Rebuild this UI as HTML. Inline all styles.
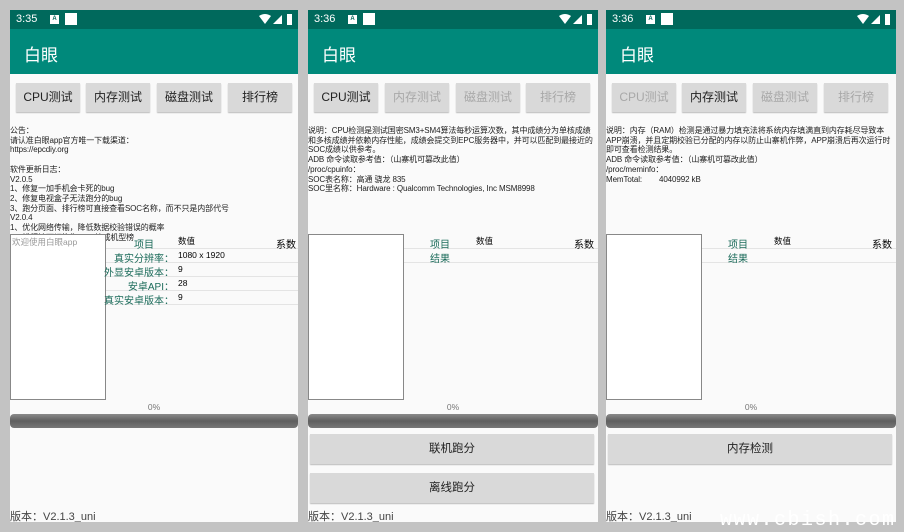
<!DOCTYPE html>
<html><head><meta charset="utf-8"><style>
*{margin:0;padding:0;box-sizing:border-box}
body{width:904px;height:532px;background:#c3c3c3;position:relative;overflow:hidden;font-family:"Liberation Sans","Noto Sans CJK SC",sans-serif}
.ph{position:absolute;top:10px;height:512px;background:#fafafa;overflow:hidden}
.sb{position:absolute;left:0;right:0;top:0;height:19px;background:#00695c;color:#fff;font-size:11px}
.sb .t{position:absolute;left:6px;top:3px}
.sb .a{position:absolute;left:40px;top:5px;width:9px;height:9px;background:#fff;font-size:6px;color:#00695c;text-align:center;line-height:9px;font-weight:bold}
.sb .w{position:absolute;left:55px;top:3px;width:12px;height:12px;background:#fff}
.sb .ic{position:absolute;right:4px;top:3px;width:36px;height:13px}
.ab{position:absolute;left:0;right:0;top:19px;height:45px;background:#00897b;color:#fff;font-size:17px;padding:12px 0 0 14px}
.btn{position:absolute;top:73px;height:29px;width:64px;background:#d9d9d9;box-shadow:0 1px 1px #bbb;font-size:12px;color:#222;text-align:center;line-height:29px}
.btn.d{color:#a8a8a8}
.tx{position:absolute;left:0;top:116px;right:0;font-size:8px;line-height:9.7px;color:#222;white-space:nowrap;letter-spacing:-0.1px}
.box{position:absolute;top:224px;height:166px;border:1px solid #888;background:#fff;font-size:8.5px;color:#999}
.tb{position:absolute;top:224px;right:0;font-size:10px}
.row{position:absolute;left:0;right:0;height:14px;border-bottom:1px solid #e4e4e4}
.g{color:#1b6b5a}
.lb{position:absolute;right:124px;top:1px;white-space:nowrap}
.pct{position:absolute;top:392px;left:0;right:0;text-align:center;font-size:8.5px;color:#777}
.pb{position:absolute;top:404px;left:0;right:0;height:14px;border-radius:4px;background:linear-gradient(#8a8a8a,#5f5f5f 50%,#777)}
.bb{position:absolute;left:2px;right:4px;height:30px;background:#d9d9d9;box-shadow:0 1px 1px #bbb;text-align:center;line-height:30px;font-size:11.5px;color:#222}
.ver{position:absolute;left:0;top:498px;font-size:11px;color:#444}
.wm{position:absolute;left:720px;top:509px;font-size:20px;color:#fff;letter-spacing:1.5px;font-family:"Liberation Mono",monospace;white-space:nowrap}
</style></head><body>

<!-- phone 1 -->
<div class="ph" style="left:10px;width:288px">
<div class="sb"><span class="t">3:35</span><span class="a">A</span><span class="w"></span>
<svg class="ic" viewBox="0 0 36 13"><path d="M1 3 Q7 -1 13 3 L7 11Z" fill="#fff"/><path d="M15 11 L24 2 L24 11Z" fill="#fff"/><rect x="29" y="1" width="5" height="11" fill="#fff"/></svg></div>
<div class="ab">白眼</div>
<div class="btn" style="left:6px">CPU测试</div>
<div class="btn" style="left:76px">内存测试</div>
<div class="btn" style="left:147px">磁盘测试</div>
<div class="btn" style="left:218px">排行榜</div>
<div class="tx">公告：<br>请认准白眼app官方唯一下载渠道：<br>https://epcdiy.org<br><br>软件更新日志：<br>V2.0.5<br>1、修复一加手机会卡死的bug<br>2、修复电视盒子无法跑分的bug<br>3、跑分页面、排行榜可直接查看SOC名称，而不只是内部代号<br>V2.0.4<br>1、优化网络传输，降低数据校验错误的概率<br>2、排行榜可切换为SOC榜或机型榜</div>
<div class="box" style="left:0;width:96px;padding:1px 0 0 1px">欢迎使用白眼app</div>
<div class="tb" style="left:96px;height:90px">
<div class="row" style="top:0;height:15px"><span class="g" style="position:absolute;left:28px;top:2px">项目</span><span style="position:absolute;left:72px;top:1px;font-size:8.5px">数值</span><span style="position:absolute;right:2px;top:2px">系数</span></div>
<div class="row" style="top:15px"><span class="g lb">真实分辨率：</span><span style="position:absolute;left:72px;top:1px;font-size:8.5px">1080 x 1920</span></div>
<div class="row" style="top:29px"><span class="g lb">外显安卓版本：</span><span style="position:absolute;left:72px;top:1px;font-size:8.5px">9</span></div>
<div class="row" style="top:43px"><span class="g lb">安卓API：</span><span style="position:absolute;left:72px;top:1px;font-size:8.5px">28</span></div>
<div class="row" style="top:57px"><span class="g lb">真实安卓版本：</span><span style="position:absolute;left:72px;top:1px;font-size:8.5px">9</span></div>
</div>
<div class="pct">0%</div><div class="pb"></div>
<div class="ver">版本：V2.1.3_uni</div>
</div>

<!-- phone 2 -->
<div class="ph" style="left:308px;width:290px">
<div class="sb"><span class="t">3:36</span><span class="a">A</span><span class="w"></span>
<svg class="ic" viewBox="0 0 36 13"><path d="M1 3 Q7 -1 13 3 L7 11Z" fill="#fff"/><path d="M15 11 L24 2 L24 11Z" fill="#fff"/><rect x="29" y="1" width="5" height="11" fill="#fff"/></svg></div>
<div class="ab">白眼</div>
<div class="btn" style="left:6px">CPU测试</div>
<div class="btn d" style="left:77px">内存测试</div>
<div class="btn d" style="left:148px">磁盘测试</div>
<div class="btn d" style="left:218px">排行榜</div>
<div class="tx">说明：CPU检测是测试国密SM3+SM4算法每秒运算次数，其中成绩分为单核成绩<br>和多核成绩并依赖内存性能，成绩会提交到EPC服务器中，并可以匹配到最接近的<br>SOC成绩以供参考。<br>ADB 命令读取参考值：（山寨机可篡改此值）<br>/proc/cpuinfo：<br>SOC表名称：高通 骁龙 835<br>SOC里名称：Hardware : Qualcomm Technologies, Inc MSM8998</div>
<div class="box" style="left:0;width:96px"></div>
<div class="tb" style="left:96px;height:40px">
<div class="row" style="top:0;height:15px"><span class="g" style="position:absolute;left:26px;top:2px">项目</span><span style="position:absolute;left:72px;top:1px;font-size:8.5px">数值</span><span style="position:absolute;right:4px;top:2px">系数</span></div>
<div class="row" style="top:15px"><span class="g" style="position:absolute;left:26px;top:1px">结果</span></div>
</div>
<div class="pct">0%</div><div class="pb"></div>
<div class="bb" style="top:424px">联机跑分</div>
<div class="bb" style="top:463px">离线跑分</div>
<div class="ver">版本：V2.1.3_uni</div>
</div>

<!-- phone 3 -->
<div class="ph" style="left:606px;width:290px">
<div class="sb"><span class="t">3:36</span><span class="a">A</span><span class="w"></span>
<svg class="ic" viewBox="0 0 36 13"><path d="M1 3 Q7 -1 13 3 L7 11Z" fill="#fff"/><path d="M15 11 L24 2 L24 11Z" fill="#fff"/><rect x="29" y="1" width="5" height="11" fill="#fff"/></svg></div>
<div class="ab">白眼</div>
<div class="btn d" style="left:6px">CPU测试</div>
<div class="btn" style="left:76px">内存测试</div>
<div class="btn d" style="left:147px">磁盘测试</div>
<div class="btn d" style="left:218px">排行榜</div>
<div class="tx">说明：内存（RAM）检测是通过暴力填充法将系统内存填满直到内存耗尽导致本<br>APP崩溃，并且定期校验已分配的内存以防止山寨机作弊，APP崩溃后再次运行时<br>即可查看检测结果。<br>ADB 命令读取参考值：（山寨机可篡改此值）<br>/proc/meminfo：<br>MemTotal:&nbsp;&nbsp;&nbsp;&nbsp;&nbsp;&nbsp;&nbsp;&nbsp;4040992 kB</div>
<div class="box" style="left:0;width:96px"></div>
<div class="tb" style="left:96px;height:40px">
<div class="row" style="top:0;height:15px"><span class="g" style="position:absolute;left:26px;top:2px">项目</span><span style="position:absolute;left:72px;top:1px;font-size:8.5px">数值</span><span style="position:absolute;right:4px;top:2px">系数</span></div>
<div class="row" style="top:15px"><span class="g" style="position:absolute;left:26px;top:1px">结果</span></div>
</div>
<div class="pct">0%</div><div class="pb"></div>
<div class="bb" style="top:424px">内存检测</div>
<div class="ver">版本：V2.1.3_uni</div>
</div>

<div class="wm">www.cbish.com</div>
</body></html>
